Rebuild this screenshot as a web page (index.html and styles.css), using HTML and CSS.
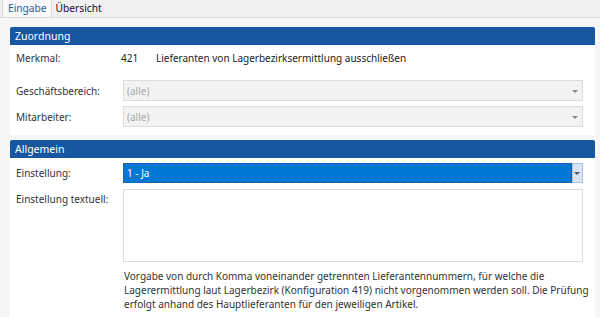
FILE: index.html
```html
<!DOCTYPE html>
<html lang="de">
<head>
  <meta charset="UTF-8">
  <title>Konfiguration</title>
  <link rel="stylesheet" href="styles.css">
</head>
<body>
  <div class="tabs">
    <span class="tab active">Eingabe</span>
    <span class="tab">Übersicht</span>
  </div>
  <div class="page">
    <section class="group">
      <h2 class="group-title">Zuordnung</h2>
      <div class="group-body">
        <div class="row row-info">
          <label>Merkmal:</label>
          <div class="info"><span class="nr">421</span><span>Lieferanten von Lagerbezirksermittlung ausschließen</span></div>
        </div>
        <div class="row row-first">
          <label>Geschäftsbereich:</label>
          <div class="combo disabled"><span>(alle)</span><i class="arrow"></i></div>
        </div>
        <div class="row">
          <label>Mitarbeiter:</label>
          <div class="combo disabled"><span>(alle)</span><i class="arrow"></i></div>
        </div>
      </div>
    </section>

    <section class="group">
      <h2 class="group-title">Allgemein</h2>
      <div class="group-body second">
        <div class="row">
          <label>Einstellung:</label>
          <div class="combo focus"><span class="value">1 - Ja</span><span class="drop"><i class="arrow"></i></span></div>
        </div>
        <div class="row row-top">
          <label>Einstellung textuell:</label>
          <div class="memo"></div>
        </div>
        <div class="row">
          <span></span>
          <p class="hint">Vorgabe von durch Komma voneinander getrennten Lieferantennummern, für welche die Lagerermittlung laut Lagerbezirk (Konfiguration 419) nicht vorgenommen werden soll. Die Prüfung erfolgt anhand des Hauptlieferanten für den jeweiligen Artikel.</p>
        </div>
      </div>
    </section>
  </div>
</body>
</html>
```

FILE: styles.css
```css
body{
  margin: 0;
  background-color: #f6f6f6;
  font-family: "Noto Sans", "Open Sans", sans-serif;
  font-size: 10px;
  color: #222;
  overflow: hidden;
}
/* Reiter */
.tabs{
  display: flex;
  height: 17px;
  background-color: #f0f0f0;
  border-bottom: 1px solid #dadada;
  padding-left: 2px;
}
.tab{
  padding: 0 4px;
  line-height: 17px;
  font-size: 10.2px;
  color: #111;
}
.tab.active{
  background-color: #f9f9f9;
  border-left: 1px solid #d8d8d8;
  border-right: 1px solid #d8d8d8;
  color: #1c5f9c;
  padding: 0 4px 0 5px;
}
.page{
  padding: 9px 5px 0 10px;
  display: flex;
  flex-direction: column;
  gap: 5px;
}
/* Gruppen */
.group{
  background-color: #fff;
}
.group-title{
  margin: 0;
  height: 18px;
  line-height: 18px;
  padding-left: 5px;
  background-color: #1657a0;
  border-radius: 2px 2px 0 0;
  color: #fff;
  font-size: 10.5px;
  font-weight: normal;
}
.group-body{
  padding: 2px 12px 8px 6px;
  display: flex;
  flex-direction: column;
  gap: 5px;
}
.group-body.second{
  padding-top: 5px;
}
.row{
  display: grid;
  grid-template-columns: 107px 1fr;
  align-items: center;
}
.row label{
  color: #333;
}
.row-info{
  height: 22px;
}
.row-first{
  margin-top: 6px;
}
.row-top{
  align-items: start;
  margin-top: 1px;
}
.row-top label{
  padding-top: 3px;
}
.info{
  display: flex;
}
.info .nr{
  width: 35px;
  margin-left: -2px;
}
/* Auswahlfelder */
.combo{
  position: relative;
  height: 21px;
  box-sizing: border-box;
  border: 1px solid #dcdcdc;
  display: flex;
  align-items: center;
  padding-left: 3px;
}
.combo.disabled{
  background-color: #f3f3f3;
  color: #a8a8a8;
}
.arrow{
  position: absolute;
  right: 4px;
  top: 9px;
  border-left: 3px solid transparent;
  border-right: 3px solid transparent;
  border-top: 3px solid #888;
}
.combo.focus{
  height: 20px;
  border: none;
  padding: 0;
}
.combo .value{
  flex: 1;
  height: 100%;
  box-sizing: border-box;
  background-color: #0078d7;
  border: 1px dotted #5a4a3a;
  color: #fff;
  padding-left: 3px;
  line-height: 18px;
}
.drop{
  position: relative;
  width: 11px;
  height: 100%;
  box-sizing: border-box;
  background-color: #d8e4f4;
  border: 1px solid #a9c3ea;
}
.drop .arrow{
  right: 2px;
  top: 8px;
  border-top-color: #555;
}
.memo{
  height: 73px;
  border: 1px solid #dcdcdc;
  box-sizing: border-box;
}
.hint{
  margin: 2px -10px 0 0;
  line-height: 14px;
  color: #333;
  padding-left: 1px;
}
```
